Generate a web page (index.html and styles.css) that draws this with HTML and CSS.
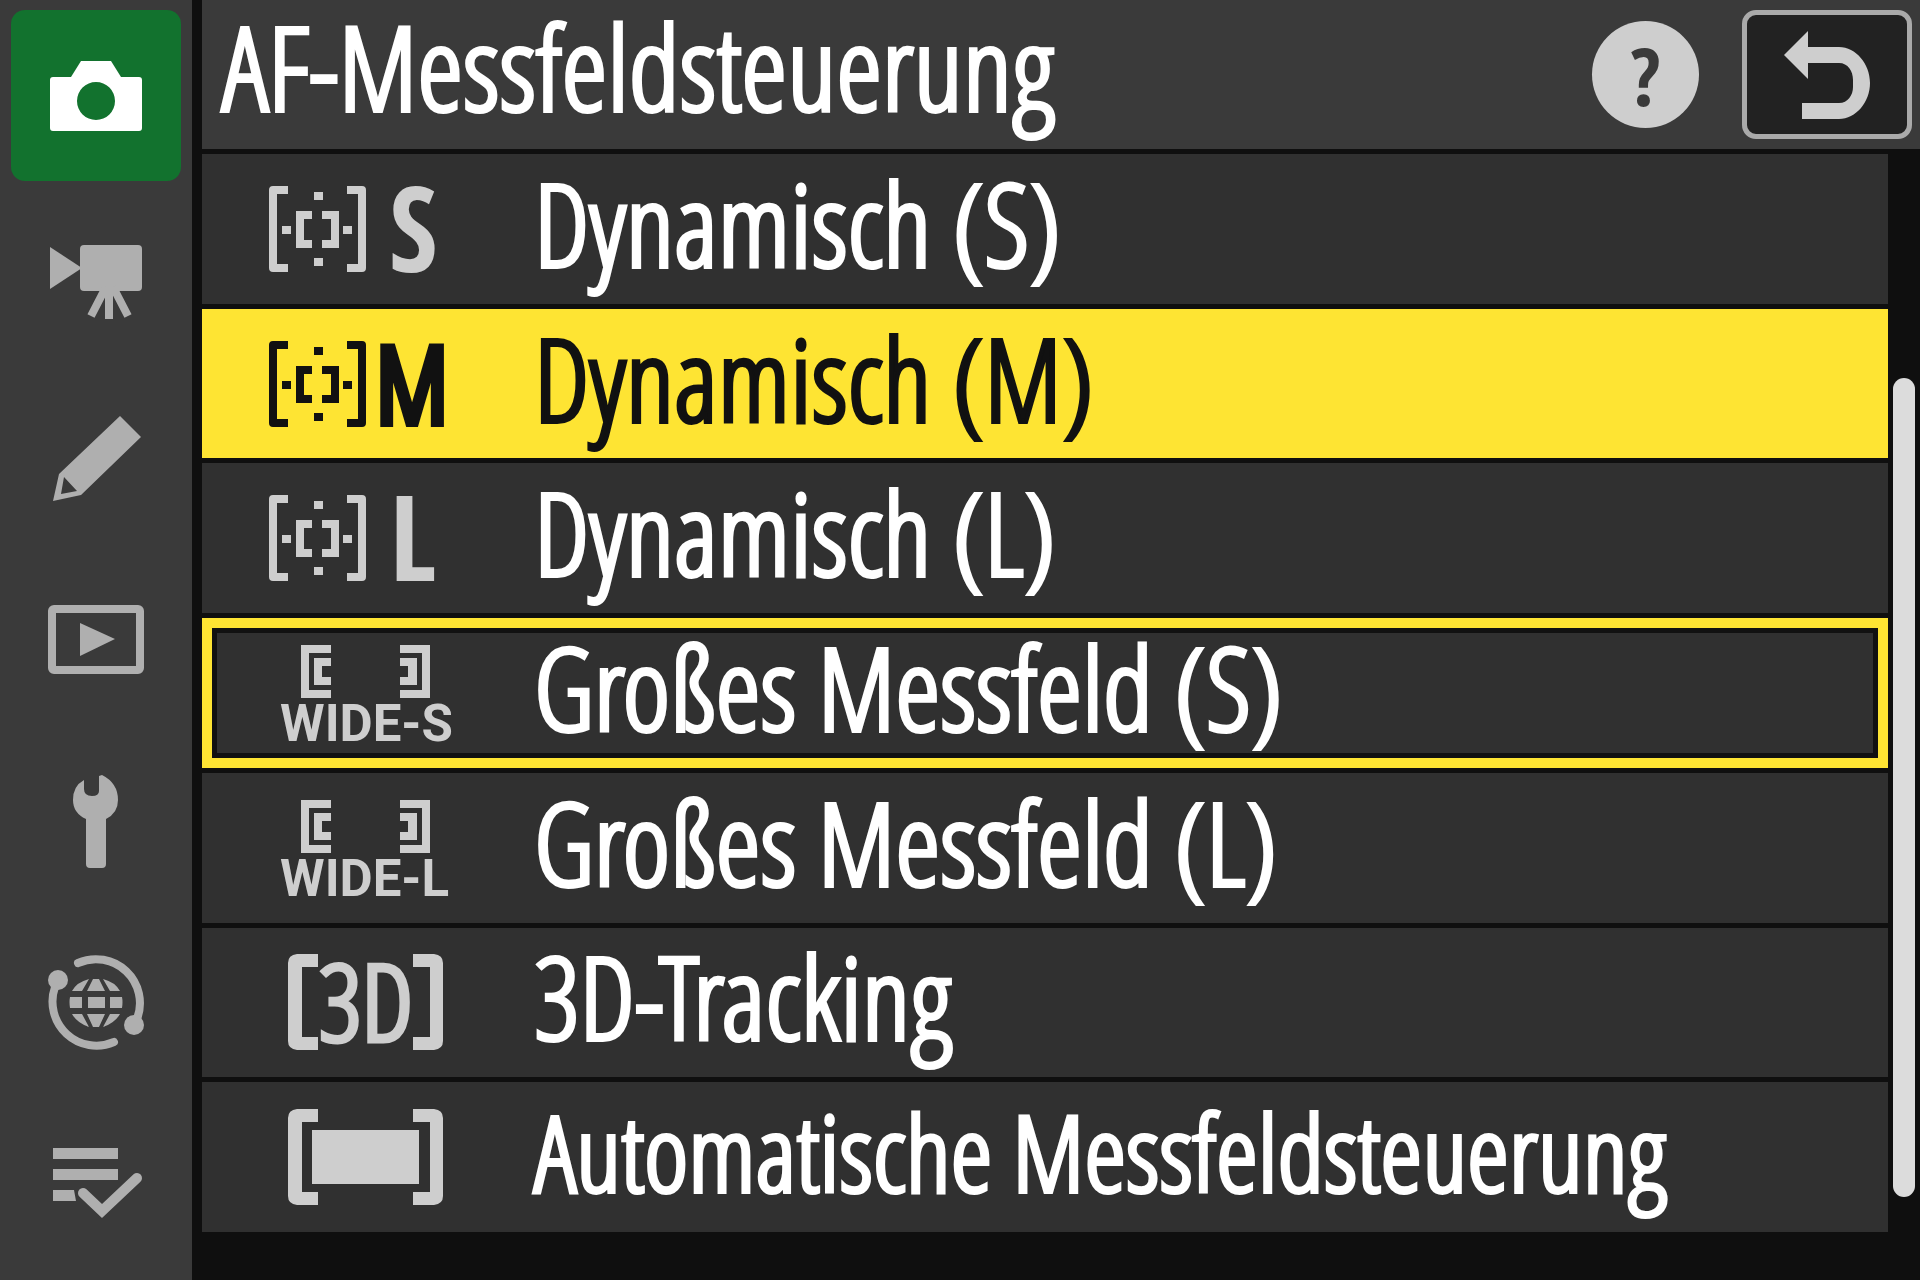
FILE: index.html
```html
<!DOCTYPE html>
<html lang="de">
<head>
<meta charset="utf-8">
<meta name="viewport" content="width=device-width, initial-scale=1">
<title>AF-Messfeldsteuerung</title>
<link rel="stylesheet" href="styles.css">
</head>
<body>
<svg width="0" height="0" class="defs" aria-hidden="true">
  <symbol id="dynamic" viewBox="0 0 100 110">
    <path d="M20 12H5Q1 12 1 16V94Q1 98 5 98H20V90H9V20H20ZM79 12H94Q98 12 98 16V94Q98 98 94 98H79V90H90V20H79Z"/>
    <path d="M28 37H44V45H36V66H44V74H28ZM71 37H54V45H63V66H54V74H71Z"/>
    <path d="M46 18h9v8h-9zM46 84h9v8h-9zM14 52h9v8h-9zM75 52h9v8h-9z"/>
  </symbol>
  <symbol id="wide" viewBox="0 0 192 110">
    <path d="M33 7H63V15H41V52H63V60H33ZM162 7H132V15H154V52H132V60H162Z"/>
    <path d="M46 20H63V28H54V39H63V47H46ZM149 20H132V28H140V39H132V47H149Z"/>
  </symbol>
  <symbol id="frame" viewBox="0 0 192 110">
    <path d="M50 7H29Q20 8 20 16V94Q20 102 29 103H50V90H34V20H50ZM145 7H166Q175 8 175 16V94Q175 102 166 103H145V90H162V20H145Z"/>
  </symbol>
</svg>
<div class="screen">
  <nav class="tabs" aria-label="Menüs">
    <button class="tab tab-active" type="button" aria-label="Fotoaufnahme">
      <svg viewBox="0 0 96 96"><path fill-rule="evenodd" d="M23 29 33 13H63L73 29H91Q94 29 94 32V80Q94 83 91 83H5Q2 83 2 80V32Q2 29 5 29ZM48 34A19 19 0 1 0 48 72A19 19 0 1 0 48 34Z"/></svg>
    </button>
    <button class="tab" type="button" aria-label="Videoaufnahme">
      <svg viewBox="0 0 96 96"><path d="M2 18 34 39 2 60Z"/><rect x="32" y="16" width="62" height="46" rx="4"/><path class="line" stroke-width="8" d="M58 58 43 87M61 58V90M65 58 80 87"/></svg>
    </button>
    <button class="tab" type="button" aria-label="Individualfunktionen">
      <svg viewBox="0 0 96 96"><path fill-rule="evenodd" d="M72 5 93 26 33 84 5 90 11 63ZM16 66 13 83 29 80Z"/></svg>
    </button>
    <button class="tab" type="button" aria-label="Wiedergabe">
      <svg viewBox="0 0 96 96"><rect class="line" stroke-width="8" x="4" y="17" width="88" height="61" rx="2"/><path d="M32 31 67 47 32 64Z"/></svg>
    </button>
    <button class="tab" type="button" aria-label="System">
      <svg viewBox="0 0 96 96"><path d="M36 7Q25 13 25 27Q25 40 38 46V91Q38 95 42 95H54Q58 95 58 91V46Q70 40 70 27Q70 10 54 2L51 3V18Q51 23 44 23Q36 23 36 16Z"/></svg>
    </button>
    <button class="tab" type="button" aria-label="Netzwerk">
      <svg viewBox="0 0 96 96"><path class="line round" stroke-width="8" d="M30 8A44 44 0 0 1 89 64M7 32A44 44 0 0 0 66 87"/><circle cx="86" cy="70" r="10"/><circle cx="10" cy="25" r="10"/>
      <path d="M45 24H51L57 36H39ZM40 42H57V53H40ZM39 59H57L51 72H45ZM24 36Q29 27 41 24L34 36ZM72 36Q67 27 55 24L62 36ZM22 42H34V53H22Q21 47 22 42ZM74 42H62V53H74Q75 47 74 42ZM24 59H34L41 72Q29 68 24 59ZM72 59H62L55 72Q67 68 72 59Z"/></svg>
    </button>
    <button class="tab" type="button" aria-label="Mein Menü">
      <svg viewBox="0 0 96 96"><path d="M5 12H70V23H5ZM5 33H70V44H5ZM5 54H26L28 65H5Z"/><path class="line round" stroke-width="10" d="M35 57 54 75 89 42"/></svg>
    </button>
  </nav>

  <main class="panel">
    <header class="header">
      <h1 class="title">AF-Messfeldsteuerung</h1>
      <button class="help" type="button" aria-label="Hilfe">?</button>
      <button class="back" type="button" aria-label="Zurück">
        <svg viewBox="0 0 88 90"><path d="M1 25 25 1V17H56C73 17 87 34 87 53S73 89 56 89H19V73H56C65 73 70 65 70 57V50C70 41 65 33 56 33H25V49Z"/></svg>
      </button>
    </header>

    <div class="content">
      <div class="options">
        <button class="option" type="button">
          <svg class="mode" viewBox="0 0 192 110"><use href="#dynamic" width="100" height="110"/><text class="letter" x="145" y="98">S</text></svg>
          <span>Dynamisch (S)</span>
        </button>
        <button class="option option-current" type="button">
          <svg class="mode" viewBox="0 0 192 110"><use href="#dynamic" width="100" height="110"/><text class="letter letter-slim" x="144" y="94">M</text></svg>
          <span>Dynamisch (M)</span>
        </button>
        <button class="option" type="button">
          <svg class="mode" viewBox="0 0 192 110"><use href="#dynamic" width="100" height="110"/><text class="letter" x="145" y="98">L</text></svg>
          <span>Dynamisch (L)</span>
        </button>
        <button class="option option-focus" type="button">
          <svg class="mode" viewBox="0 0 192 110"><use href="#wide"/><text class="caption" x="12" y="103">WIDE-S</text></svg>
          <span>Großes Messfeld (S)</span>
        </button>
        <button class="option" type="button">
          <svg class="mode" viewBox="0 0 192 110"><use href="#wide"/><text class="caption" x="12" y="103">WIDE-L</text></svg>
          <span>Großes Messfeld (L)</span>
        </button>
        <button class="option" type="button">
          <svg class="mode" viewBox="0 0 192 110"><use href="#frame"/><text class="tracking" x="98" y="94">3D</text></svg>
          <span>3D-Tracking</span>
        </button>
        <button class="option option-long" type="button">
          <svg class="mode" viewBox="0 0 192 110"><use href="#frame"/><rect x="44" y="28" width="107" height="54"/></svg>
          <span>Automatische Messfeldsteuerung</span>
        </button>
      </div>
      <div class="track"><div class="thumb"></div></div>
    </div>
  </main>
</div>
</body>
</html>
```
FILE: styles.css
```css
* { box-sizing: border-box; }

body {
  margin: 0;
  background: #0f0f0f;
  color: #fff;
  font-family: "Open Sans Condensed Light", "Open Sans Condensed", "Roboto Condensed", "Noto Sans", sans-serif;
}

button {
  margin: 0;
  padding: 0;
  border: 0;
  color: inherit;
  font: inherit;
}

svg { fill: currentColor; flex: none; overflow: visible; }

.defs { position: absolute; }

.line { fill: none; stroke: currentColor; }
.round { stroke-linecap: round; }

.screen {
  display: grid;
  grid-template-columns: 192px 1fr;
  gap: 10px;
  min-height: 100vh;
}

.tabs {
  display: grid;
  grid-auto-rows: 1fr;
  gap: 10px;
  padding: 10px 11px;
  background: #3a3a3a;
}

.tab {
  display: flex;
  align-items: center;
  justify-content: center;
  border-radius: 14px;
  background: none;
  color: #afafaf;
}

.tab svg { width: 96px; height: 96px; }

.tab-active { background: #12722e; color: #fff; }

.panel {
  display: flex;
  flex-direction: column;
  gap: 5px;
  min-width: 0;
}

.header {
  display: flex;
  align-items: center;
  height: 149px;
  padding: 0 8px 0 20px;
  background: #3a3a3a;
}

.title {
  flex: 1;
  margin: 0;
  padding-bottom: 18px;
  font-size: 116px;
  font-weight: 400;
  line-height: 120px;
  white-space: nowrap;
  -webkit-text-stroke: 4px currentColor;
}

.help {
  width: 107px;
  height: 107px;
  margin-right: 43px;
  border-radius: 50%;
  background: #cecece;
  color: #3a3a3a;
  font-family: "Open Sans Condensed", "Noto Sans", sans-serif;
  font-size: 80px;
  font-weight: 700;
  line-height: 107px;
}

.back {
  display: flex;
  align-items: center;
  justify-content: center;
  width: 170px;
  height: 129px;
  border: 5px solid #aaa;
  border-radius: 14px;
  background: #222;
  color: #cecece;
}

.back svg { width: 88px; height: 90px; }

.content {
  display: flex;
  flex: 1;
  padding-bottom: 48px;
}

.options {
  display: grid;
  flex: 1;
  grid-auto-rows: 1fr;
  gap: 5px;
}

.option {
  display: flex;
  align-items: center;
  gap: 74px;
  padding: 0 0 0 66px;
  background: #303030;
  font-size: 114px;
  line-height: 116px;
  text-align: left;
  white-space: nowrap;
}

.option span {
  padding-bottom: 12px;
  -webkit-text-stroke: 4px currentColor;
}

.mode { width: 192px; height: 110px; color: #cecece; }

.option-current { background: #fee433; color: #111; }
.option-current .mode { color: #111; }

.option-focus {
  padding-left: 56px;
  border: 10px solid #fee433;
  box-shadow: inset 0 0 0 5px #111;
}

.option-long { font-size: 106px; }

.letter {
  font-family: "Open Sans Condensed", "Noto Sans", sans-serif;
  font-size: 118px;
  font-weight: 700;
  text-anchor: middle;
}

.letter-slim {
  font-family: "Open Sans Condensed Light", "Noto Sans", sans-serif;
  font-size: 106px;
  font-weight: 400;
  stroke: currentColor;
  stroke-width: 8px;
}

.tracking {
  font-size: 106px;
  text-anchor: middle;
  stroke: currentColor;
  stroke-width: 5px;
}

.caption {
  font-family: Roboto, sans-serif;
  font-size: 51px;
  font-weight: 700;
}

.track {
  width: 32px;
  padding: 0 5px;
}

.thumb {
  height: 76%;
  margin-top: 224px;
  border-radius: 11px;
  background: #dcdcdc;
}
```
